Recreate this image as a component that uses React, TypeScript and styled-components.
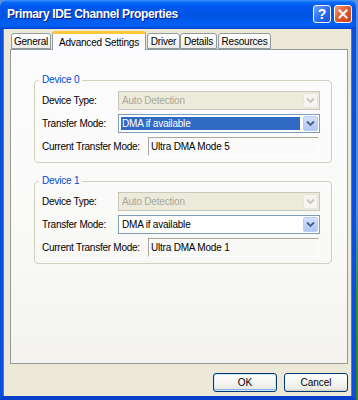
import styled, { createGlobalStyle } from "styled-components";

const GlobalStyle = createGlobalStyle`
    html, body {
        margin: 0;
        padding: 0;
        background: linear-gradient(180deg, #5b8fdc 0%, #4f8fd0 55%, #3f8a2c 75%, #3a7d26 100%);
    }
    #root {
        width: 358px;
        height: 400px;
        overflow: hidden;
    }
`;

const UI_FONT = `"Liberation Sans", Arial, sans-serif`;

const tabs = [
    { label: "General", w: 40, gap: 0 },
    { label: "Advanced Settings", w: 94, gap: 1, active: true },
    { label: "Driver", w: 33, gap: 0 },
    { label: "Details", w: 37, gap: 1 },
    { label: "Resources", w: 53, gap: 2 },
];

const devices = [
    { name: "Device 0", mode: "DMA if available", current: "Ultra DMA Mode 5", focused: true },
    { name: "Device 1", mode: "DMA if available", current: "Ultra DMA Mode 1", focused: false },
];

const Chevron = ({ color }: { color: string }) => (
    <svg width="9" height="7" viewBox="0 0 9 7">
        <path d="M1 1.5 L4.5 5 L8 1.5" fill="none" stroke={color} strokeWidth="1.8" />
    </svg>
);

const App = () => {
    return (
        <>
            <GlobalStyle />
            <Window>
                <TitleBar>
                    <Title>Primary IDE Channel Properties</Title>
                    <CaptionButtons>
                        <HelpButton>?</HelpButton>
                        <CloseButton>
                            <svg width="10" height="10" viewBox="0 0 10 10">
                                <path d="M1.5 1.5 L8.5 8.5 M8.5 1.5 L1.5 8.5" stroke="#fff" strokeWidth="2" strokeLinecap="square" />
                            </svg>
                        </CloseButton>
                    </CaptionButtons>
                </TitleBar>
                <Client>
                    <TabStrip>
                        {tabs.map((t) => (
                            <Tab key={t.label} $w={t.w} $gap={t.gap} $active={!!t.active}>
                                {t.label}
                            </Tab>
                        ))}
                    </TabStrip>
                    <Panel>
                        {devices.map((d) => (
                            <Group key={d.name}>
                                <Legend>{d.name}</Legend>
                                <Row $label={76}>
                                    <Label>Device Type:</Label>
                                    <Combo $disabled>
                                        <ComboValue $disabled>Auto Detection</ComboValue>
                                        <ArrowButton $disabled>
                                            <Chevron color="#c9c7ba" />
                                        </ArrowButton>
                                    </Combo>
                                </Row>
                                <Row $label={76}>
                                    <Label>Transfer Mode:</Label>
                                    <Combo>
                                        <ComboValue $selected={d.focused}>{d.mode}</ComboValue>
                                        <ArrowButton>
                                            <Chevron color="#4d6185" />
                                        </ArrowButton>
                                    </Combo>
                                </Row>
                                <Row $label={106}>
                                    <Label>Current Transfer Mode:</Label>
                                    <StaticBox>{d.current}</StaticBox>
                                </Row>
                            </Group>
                        ))}
                    </Panel>
                    <ButtonBar>
                        <PushButton $default>OK</PushButton>
                        <PushButton>Cancel</PushButton>
                    </ButtonBar>
                </Client>
            </Window>
        </>
    );
};

const Window = styled.div`
    width: 356px;
    height: 400px;
    display: flex;
    flex-direction: column;
    border-radius: 7px 7px 0 0;
    overflow: hidden;
`;

const TitleBar = styled.div`
    height: 29px;
    flex-shrink: 0;
    display: flex;
    align-items: center;
    justify-content: space-between;
    padding: 0 4px 0 7px;
    box-sizing: border-box;
    background: linear-gradient(180deg, #3d95ff 0%, #0a6af6 8%, #0058ee 22%, #0054e3 55%, #0060f5 85%, #005ae8 92%, #0040cc 100%);
`;

const Title = styled.span`
    font-family: "Liberation Sans", sans-serif;
    font-weight: bold;
    font-size: 12px;
    letter-spacing: -0.35px;
    color: #ffffff;
    text-shadow: 1px 1px 0 #0a1c8a;
    margin-top: -1px;
`;

const CaptionButtons = styled.div`
    display: flex;
    gap: 3px;
    margin-top: -1px;
`;

const CaptionBase = styled.div`
    width: 16px;
    height: 16px;
    border: 1px solid #ffffff;
    border-radius: 3px;
    display: flex;
    align-items: center;
    justify-content: center;
    box-sizing: content-box;
`;

const HelpButton = styled(CaptionBase)`
    background: linear-gradient(135deg, #6fa3ff 0%, #2a6cf0 55%, #1c4fd8 100%);
    color: #fff;
    font-family: "Liberation Sans", sans-serif;
    font-weight: bold;
    font-size: 14px;
`;

const CloseButton = styled(CaptionBase)`
    background: linear-gradient(135deg, #f09a7c 0%, #e0582e 50%, #c73d14 100%);
`;

const Client = styled.div`
    flex: 1;
    background: #ece9d8;
    border-left: 3px solid #0c4fdc;
    border-right: 4px solid #0c4fdc;
    border-bottom: 4px solid #0a3fc9;
    box-shadow: inset 1px 0 0 #3a7bf0, inset -1px 0 0 #3a7bf0;
    padding: 2px 4px 0 7px;
    display: flex;
    flex-direction: column;
`;

const TabStrip = styled.div`
    display: flex;
    align-items: flex-end;
    height: 18px;
    padding-left: 1px;
    position: relative;
    z-index: 1;
`;

const Tab = styled.div<{ $w: number; $gap: number; $active: boolean }>`
    width: ${(p) => p.$w}px;
    margin-right: ${(p) => p.$gap}px;
    margin-left: ${(p) => (p.$active ? 1 : 0)}px;
    height: ${(p) => (p.$active ? 19 : 16)}px;
    margin-bottom: ${(p) => (p.$active ? -1 : 0)}px;
    box-sizing: border-box;
    border: 1px solid #919b9c;
    border-bottom: ${(p) => (p.$active ? "none" : "1px solid #919b9c")};
    border-top: ${(p) => (p.$active ? "3px solid #ffc83c" : "1px solid #919b9c")};
    border-radius: 3px 3px 0 0;
    background: ${(p) => (p.$active ? "#fcfcfe" : "linear-gradient(180deg, #ffffff 0%, #f7f7f4 50%, #ecebe6 100%)")};
    font-family: ${UI_FONT};
    font-size: 10px;
    letter-spacing: -0.2px;
    color: #000;
    display: flex;
    align-items: center;
    justify-content: center;
    white-space: nowrap;
    padding-top: ${(p) => (p.$active ? 0 : 1)}px;
`;

const Panel = styled.div`
    height: 315px;
    box-sizing: border-box;
    border: 1px solid #919b9c;
    background: linear-gradient(180deg, #fcfcfe 0%, #f9f9f7 60%, #f4f3ee 100%);
    padding: 23px 15px 0 23px;
    display: flex;
    flex-direction: column;
    gap: 11px;
`;

const Group = styled.fieldset`
    margin: 0;
    padding: 4px 11px 6px 7px;
    border: 1px solid #d0d0bf;
    border-radius: 4px;
    display: flex;
    flex-direction: column;
    gap: 4px;
    min-width: 0;
`;

const Legend = styled.legend`
    font-family: ${UI_FONT};
    font-size: 10px;
    letter-spacing: -0.2px;
    color: #0046d5;
    padding: 0 3px;
    margin-left: -3px;
    line-height: 14px;
`;

const Row = styled.div<{ $label: number }>`
    display: grid;
    grid-template-columns: ${(p) => p.$label}px 1fr;
    align-items: center;
    height: 19px;
`;

const Label = styled.span`
    font-family: ${UI_FONT};
    font-size: 10px;
    letter-spacing: -0.25px;
    color: #000;
    white-space: nowrap;
`;

const Combo = styled.div<{ $disabled?: boolean }>`
    height: 19px;
    box-sizing: border-box;
    border: 1px solid ${(p) => (p.$disabled ? "#c9c7ba" : "#7f9db9")};
    background: ${(p) => (p.$disabled ? "#ebeadb" : "#ffffff")};
    display: flex;
    align-items: stretch;
`;

const ComboValue = styled.div<{ $disabled?: boolean; $selected?: boolean }>`
    flex: 1;
    margin: 2px 2px 2px 2px;
    padding-left: 1px;
    display: flex;
    align-items: center;
    font-family: ${UI_FONT};
    font-size: 10px;
    letter-spacing: -0.2px;
    color: ${(p) => (p.$disabled ? "#aca899" : p.$selected ? "#ffffff" : "#000000")};
    background: ${(p) => (p.$selected ? "#316ac5" : "transparent")};
    white-space: nowrap;
    overflow: hidden;
`;

const ArrowButton = styled.div<{ $disabled?: boolean }>`
    width: 15px;
    margin: 1px;
    border-radius: 2px;
    box-sizing: border-box;
    border: 1px solid ${(p) => (p.$disabled ? "#e8e6dc" : "#b8cdf6")};
    background: ${(p) => (p.$disabled ? "#f5f4ef" : "linear-gradient(180deg, #d3e1fc 0%, #c1d3fb 50%, #b0c6f5 100%)")};
    display: flex;
    align-items: center;
    justify-content: center;
`;

const StaticBox = styled.div`
    height: 19px;
    margin-right: 1px;
    box-sizing: border-box;
    border-top: 1px solid #aca899;
    border-left: 1px solid #aca899;
    border-right: 1px solid #ffffff;
    border-bottom: 1px solid #ffffff;
    padding-left: 2px;
    display: flex;
    align-items: center;
    font-family: ${UI_FONT};
    font-size: 10px;
    letter-spacing: -0.2px;
    color: #000;
    white-space: nowrap;
`;

const ButtonBar = styled.div`
    display: flex;
    justify-content: flex-end;
    gap: 7px;
    padding-top: 9px;
`;

const PushButton = styled.div<{ $default?: boolean }>`
    width: 64px;
    height: 19px;
    box-sizing: border-box;
    border: 1px solid #003c74;
    border-radius: 3px;
    background: linear-gradient(180deg, #ffffff 0%, #f7f7f4 40%, #ecebe6 85%, #d6d0c5 100%);
    box-shadow: ${(p) => (p.$default ? "inset 0 0 0 1px #cee7ff, inset 0 -1px 0 1px #89adf4" : "none")};
    display: flex;
    align-items: center;
    justify-content: center;
    font-family: ${UI_FONT};
    font-size: 10px;
    color: #000;
`;

export default App;
